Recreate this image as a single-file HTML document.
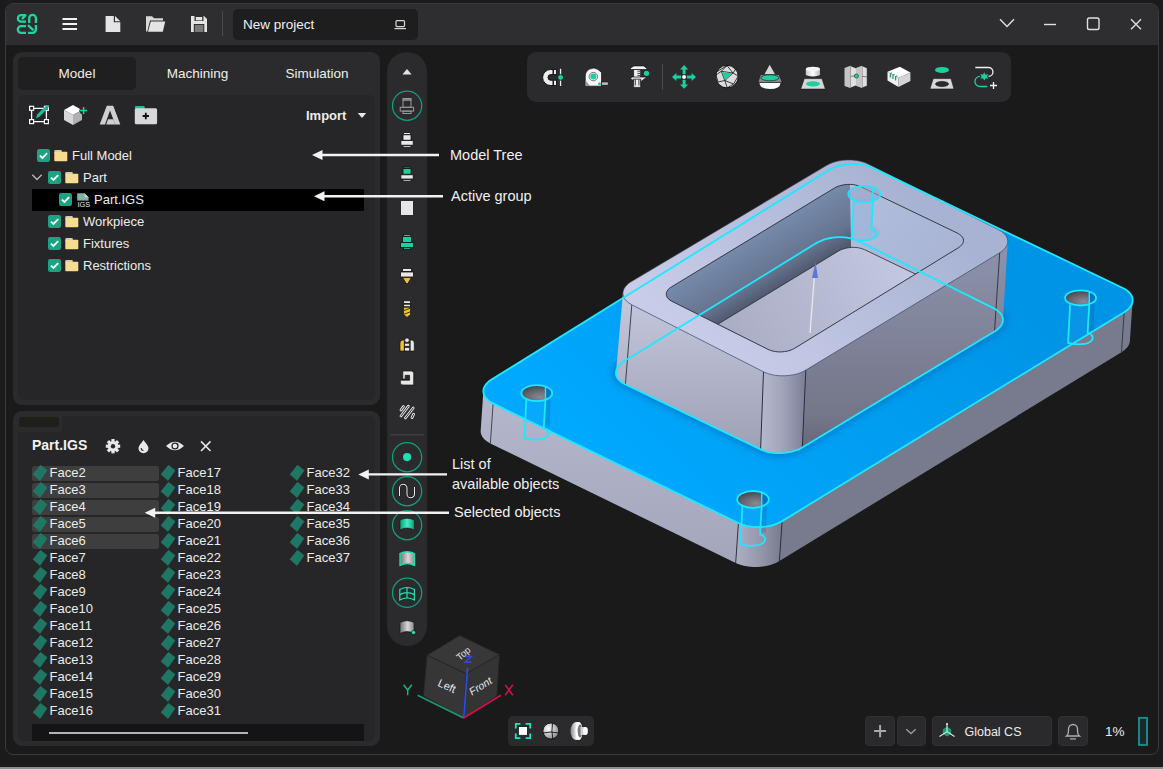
<!DOCTYPE html>
<html><head><meta charset="utf-8">
<style>
*{box-sizing:border-box;margin:0;padding:0}
html,body{width:1163px;height:769px;overflow:hidden;background:#1b1b1b;font-family:"Liberation Sans",sans-serif;color:#e8e8e8}
.a{position:absolute}
#win{position:absolute;left:5px;top:3px;width:1154px;height:752px;border:1px solid #3a3a3c;border-radius:8px;background:#1a1a1a;overflow:hidden}
#bottomline{position:absolute;left:0;top:767px;width:1163px;height:2px;background:#8e8e8e}
#top{position:absolute;left:0;top:0;width:1152px;height:41px;background:#2e2e30}
.panel{position:absolute;background:#2b2b2d;border-radius:9px}
.inner{position:absolute;background:#262628;border-radius:6px}
.tab{position:absolute;top:57px;height:33px;font-size:13.5px;line-height:33px;text-align:center;color:#eee}
.tree{position:absolute;font-size:13px;color:#eaeaea;line-height:14px}
.cb{position:absolute;width:13px;height:13px;background:#1e9c80;border-radius:2px}
.cb svg{position:absolute;left:0;top:0}
.fold{position:absolute;width:12px;height:10px;background:#f2d98c;border-radius:1px}
.fold:before{content:"";position:absolute;left:0;top:-2px;width:6px;height:3px;background:#f2d98c;border-radius:1px 1px 0 0}
.face{position:absolute;font-size:12.5px;color:#ececec;height:15px;line-height:15px}
.face i{position:absolute;left:4px;top:2px;width:10px;height:11px;background:#1f6e5c;transform:skewY(-20deg) rotate(35deg)}
.face.sel{background:#3e3e40;border-radius:2px}
.ann{position:absolute;font-size:14px;color:#ededed;font-family:"Liberation Sans",sans-serif}
.arr{position:absolute;height:2px;background:#f0f0f0}
.arr:before{content:"";position:absolute;left:-2px;top:-5px;border-right:11px solid #f0f0f0;border-top:6px solid transparent;border-bottom:6px solid transparent}
.vt{position:absolute;left:392px;width:30px;height:30px}
.ring{position:absolute;width:30px;height:30px;border:1.5px solid #1a9c7e;border-radius:50%}
</style></head><body>
<div id="win">
  <div id="top"></div>
</div>
<div id="bottomline"></div>

<!-- top bar -->
<svg class="a" style="left:0;top:0" width="1163" height="45" viewBox="0 0 1163 45">
  <g fill="none" stroke="#1dd6a0" stroke-width="2.3" stroke-linecap="butt">
    <path d="M26 15.1 H21.2 A3.3 3.3 0 0 0 21.2 21.7 H26"/>
    <path d="M25.4 15.4 L22.6 18.4" stroke-linecap="round"/>
    <path d="M29.2 22.9 V18.3 A3.35 3.35 0 0 1 35.9 18.3 V22.9"/>
    <path d="M26 26.2 H21.2 A3.35 3.35 0 0 0 21.2 32.9 H26"/>
    <path d="M35.9 24.9 V29.6 A3.3 3.3 0 0 1 32.6 32.9 H28"/>
    <path d="M28.7 25.8 L32.8 29.6" stroke-linecap="round"/>
  </g>
  <g fill="#f2f2f2">
    <rect x="62.5" y="18" width="14.5" height="2"/>
    <rect x="62.5" y="23" width="14.5" height="2"/>
    <rect x="62.5" y="28" width="14.5" height="2"/>
  </g>
  <path d="M105.6 16 H113.8 V22.3 H120.3 V32 H105.6 Z" fill="#e4e4e4"/>
  <path d="M115 16 L120.3 21.2 H115 Z" fill="#e4e4e4"/>
  <path d="M146 16.2 H152 L154 18.3 H163 V20.5 H150 L147.3 31.6 H146 Z" fill="#d8d8d8"/>
  <path d="M150.8 21.4 H165.2 L162.8 31.7 H148 Z" fill="#e4e4e4"/>
  <path d="M191 16 H204 L207 19 V32 H191 Z" fill="#e4e4e4"/>
  <rect x="194.5" y="16" width="9" height="5" fill="#2e2e30"/>
  <rect x="195.8" y="17" width="6.4" height="3.4" fill="#e4e4e4"/>
  <rect x="193.8" y="24" width="10.5" height="8" fill="#2e2e30"/>
  <rect x="194.8" y="25" width="8.5" height="7" fill="#7a7a7a"/>
  <rect x="222" y="11" width="1" height="25" fill="#4a4a4c"/>
  <rect x="233" y="9" width="185" height="31" rx="5" fill="#1e1e1f"/>
  <g fill="none" stroke="#d8d8d8" stroke-width="1.2">
    <rect x="396" y="20.6" width="8.5" height="6" rx="1"/>
    <path d="M394.5 28.6 H406"/>
  </g>
  <g fill="none" stroke="#e0e0e0" stroke-width="1.4">
    <path d="M1000 19.3 L1007 26.4 L1014 19.3"/>
    <path d="M1044 24.5 H1056"/>
    <rect x="1087.5" y="18" width="11.5" height="11.5" rx="1.8"/>
    <path d="M1131 19.2 L1141 29.2 M1141 19.2 L1131 29.2"/>
  </g>
</svg>
<div class="a" style="left:243px;top:17px;font-size:13.5px;line-height:16px;color:#f0f0f0">New project</div>


<!--MODEL--><svg class="a" style="left:0;top:0" width="1163" height="769" viewBox="0 0 1163 769"><defs>
<linearGradient id="plt" gradientUnits="userSpaceOnUse" x1="600" y1="480" x2="900" y2="180"><stop offset="0" stop-color="#00a9ff"/><stop offset="1" stop-color="#0094e6"/></linearGradient>
<linearGradient id="psl" gradientUnits="userSpaceOnUse" x1="0" y1="400" x2="0" y2="560"><stop offset="0" stop-color="#b4b6cc"/><stop offset="1" stop-color="#a4a6bc"/></linearGradient>
<linearGradient id="pcF" gradientUnits="userSpaceOnUse" x1="734" y1="0" x2="779" y2="0"><stop offset="0" stop-color="#aeb0c6"/><stop offset="0.6" stop-color="#9496aa"/><stop offset="1" stop-color="#7c7e92"/></linearGradient>
<linearGradient id="bsl" gradientUnits="userSpaceOnUse" x1="0" y1="300" x2="0" y2="460"><stop offset="0" stop-color="#c4c7dc"/><stop offset="1" stop-color="#9c9eb4"/></linearGradient>
<linearGradient id="bsr" gradientUnits="userSpaceOnUse" x1="0" y1="240" x2="0" y2="460"><stop offset="0" stop-color="#8e93ac"/><stop offset="0.8" stop-color="#747689"/><stop offset="1" stop-color="#606274"/></linearGradient>
<linearGradient id="bcF" gradientUnits="userSpaceOnUse" x1="758" y1="0" x2="803" y2="0"><stop offset="0" stop-color="#b8bbd0"/><stop offset="0.5" stop-color="#a4a7bc"/><stop offset="1" stop-color="#80829a"/></linearGradient>
<linearGradient id="btop" gradientUnits="userSpaceOnUse" x1="720" y1="360" x2="880" y2="170"><stop offset="0" stop-color="#c8cce8"/><stop offset="1" stop-color="#a8b3d3"/></linearGradient>
<linearGradient id="wx0" gradientUnits="userSpaceOnUse" x1="658.6" y1="294.7" x2="687.8" y2="342.5"><stop offset="0" stop-color="#768aab"/><stop offset="0.7" stop-color="#66748f"/><stop offset="1" stop-color="#505a70"/></linearGradient>
<linearGradient id="wy1" gradientUnits="userSpaceOnUse" x1="850" y1="190" x2="970" y2="290"><stop offset="0" stop-color="#b0bede"/><stop offset="1" stop-color="#a8b2d2"/></linearGradient>
<linearGradient id="flr" gradientUnits="userSpaceOnUse" x1="700" y1="340" x2="900" y2="240"><stop offset="0" stop-color="#a6a9c0"/><stop offset="1" stop-color="#c4c8e0"/></linearGradient>
<radialGradient id="hole" cx="0.6" cy="0.75" r="0.7"><stop offset="0" stop-color="#8a8a96"/><stop offset="0.7" stop-color="#60606a"/><stop offset="1" stop-color="#4a4a52"/></radialGradient>
<clipPath id="pkclip"><path d="M671.5 286.9 L669.6 288.2 L668.1 289.6 L667.1 291.2 L666.4 292.7 L666.3 294.4 L666.5 295.9 L667.3 297.5 L668.4 298.9 L670.0 300.2 L671.9 301.3 L768.1 349.4 L770.4 350.4 L773.0 351.1 L775.7 351.6 L778.6 351.9 L781.5 351.9 L784.4 351.6 L787.3 351.1 L790.0 350.4 L792.4 349.4 L794.6 348.3 L958.6 247.6 L960.4 246.3 L961.8 244.8 L962.8 243.3 L963.4 241.7 L963.5 240.2 L963.2 238.6 L962.4 237.1 L961.2 235.7 L959.5 234.4 L957.6 233.2 L860.7 186.7 L858.4 185.8 L855.9 185.1 L853.2 184.6 L850.4 184.4 L847.5 184.4 L844.7 184.7 L841.9 185.2 L839.3 185.9 L836.8 186.8 L834.7 187.9 Z"/></clipPath>
<filter id="blr" x="-10%" y="-10%" width="120%" height="120%"><feGaussianBlur stdDeviation="3"/></filter>
</defs>
<path d="M483.3 391.9 L483.9 394.5 L485.2 397.0 L487.2 399.4 L489.8 401.5 L493.1 403.4 L738.4 523.0 L735.7 563.0 L490.4 443.4 L487.1 441.5 L484.5 439.4 L482.5 437.0 L481.2 434.5 L480.6 431.9 Z" fill="url(#psl)"/>
<path d="M738.4 523.0 L742.2 524.6 L746.4 525.8 L751.0 526.6 L755.7 527.0 L760.6 527.0 L765.4 526.6 L770.1 525.8 L774.5 524.6 L778.5 523.0 L782.1 521.1 L779.4 561.1 L775.8 563.0 L771.8 564.6 L767.4 565.8 L762.7 566.6 L757.9 567.0 L753.0 567.0 L748.3 566.6 L743.7 565.8 L739.5 564.6 L735.7 563.0 Z" fill="url(#pcF)"/>
<path d="M782.1 521.1 L1124.2 312.2 L1127.3 310.0 L1129.8 307.6 L1131.5 305.0 L1132.5 302.3 L1132.7 299.6 L1130.0 339.6 L1129.8 342.3 L1128.8 345.0 L1127.1 347.6 L1124.6 350.0 L1121.5 352.2 L779.4 561.1 Z" fill="#787a8e"/>
<path d="M738.4 523.0 L735.7 563.0" stroke="#2a2a35" stroke-width="0.9"/>
<path d="M782.1 521.1 L779.4 561.1" stroke="#2a2a35" stroke-width="0.9"/>
<path d="M493.1 403.4 L490.4 443.4" stroke="#2a2a35" stroke-width="0.8"/>
<path d="M1124.2 312.2 L1121.5 352.2" stroke="#2a2a35" stroke-width="0.8"/>
<path d="M491.5 379.6 L488.5 381.7 L486.2 384.1 L484.5 386.6 L483.5 389.3 L483.3 391.9 L483.9 394.5 L485.2 397.0 L487.2 399.4 L489.8 401.5 L493.1 403.4 L738.4 523.0 L742.2 524.6 L746.4 525.8 L751.0 526.6 L755.7 527.0 L760.6 527.0 L765.4 526.6 L770.1 525.8 L774.5 524.6 L778.5 523.0 L782.1 521.1 L1124.2 312.2 L1127.3 310.0 L1129.8 307.6 L1131.5 305.0 L1132.5 302.3 L1132.7 299.6 L1132.2 297.0 L1130.9 294.4 L1128.8 292.0 L1126.1 289.8 L1122.8 288.0 L872.8 167.9 L869.0 166.4 L864.7 165.2 L860.1 164.4 L855.3 164.0 L850.4 164.1 L845.6 164.5 L840.9 165.4 L836.4 166.7 L832.3 168.3 L828.7 170.2 Z" fill="url(#plt)"/>
<path d="M545.5 397.2 L550.8 397.2 L549.8 426.2 L544.0 426.2 Z" fill="#003c80" fill-opacity="0.18"/>
<path d="M526.3 399.2 L524.3 438.2 C530.8 440.2 544.8 440.7 548.3 435.2 C550.3 431.7 546.8 428.7 543.8 428.2 L545.5 399.2 Z" fill="#9ab4d8" fill-opacity="0.05"/>
<clipPath id="hc536"><rect x="520.4" y="384.2" width="25.1" height="18"/></clipPath>
<ellipse cx="536.8" cy="393.2" rx="15.4" ry="8" fill="url(#hole)" clip-path="url(#hc536)"/>
<clipPath id="hr536"><rect x="545.5" y="384.2" width="15.4" height="18"/></clipPath>
<ellipse cx="536.8" cy="393.2" rx="15.4" ry="8" fill="#0074c4" clip-path="url(#hr536)"/>
<path d="M761.7 503.4 L767 503.4 L766 532.4 L760.2 532.4 Z" fill="#003c80" fill-opacity="0.18"/>
<path d="M742.5 505.4 L740.5 544.4 C747 546.4 761 546.9 764.5 541.4 C766.5 537.9 763 534.9 760 534.4 L761.7 505.4 Z" fill="#9ab4d8" fill-opacity="0.05"/>
<clipPath id="hc753"><rect x="736.2" y="490.0" width="25.5" height="18.8"/></clipPath>
<ellipse cx="753" cy="499.4" rx="15.8" ry="8.4" fill="url(#hole)" clip-path="url(#hc753)"/>
<clipPath id="hr753"><rect x="761.7" y="490.0" width="15.8" height="18.8"/></clipPath>
<ellipse cx="753" cy="499.4" rx="15.8" ry="8.4" fill="#0074c4" clip-path="url(#hr753)"/>
<path d="M1089.3 301.9 L1094.6 301.9 L1093.6 330.9 L1087.8 330.9 Z" fill="#003c80" fill-opacity="0.18"/>
<path d="M1070.1 303.9 L1068.1 342.9 C1074.6 344.9 1088.6 345.4 1092.1 339.9 C1094.1 336.4 1090.6 333.4 1087.6 332.9 L1089.3 303.9 Z" fill="#9ab4d8" fill-opacity="0.05"/>
<clipPath id="hc1080"><rect x="1064.1" y="289.29999999999995" width="25.2" height="17.2"/></clipPath>
<ellipse cx="1080.6" cy="297.9" rx="15.5" ry="7.6" fill="url(#hole)" clip-path="url(#hc1080)"/>
<clipPath id="hr1080"><rect x="1089.3" y="289.29999999999995" width="15.5" height="17.2"/></clipPath>
<ellipse cx="1080.6" cy="297.9" rx="15.5" ry="7.6" fill="#0074c4" clip-path="url(#hr1080)"/>
<path d="M623.8 361.5 L620.9 363.6 L618.6 365.9 L617.0 368.3 L616.1 370.9 L615.9 373.4 L616.4 376.0 L617.7 378.4 L619.6 380.6 L622.2 382.7 L625.4 384.5 L760.6 449.4 L764.2 450.9 L768.2 452.0 L772.5 452.8 L777.1 453.1 L781.7 453.1 L786.3 452.7 L790.7 451.9 L795.0 450.7 L798.9 449.3 L802.3 447.5 L994.5 331.6 L997.5 329.5 L999.9 327.2 L1001.6 324.7 L1002.6 322.2 L1003.0 319.6 L1002.5 317.0 L1001.4 314.6 L999.5 312.3 L997.0 310.2 L993.9 308.4 L859.0 241.2 L855.4 239.6 L851.3 238.4 L846.9 237.6 L842.2 237.2 L837.5 237.2 L832.8 237.7 L828.2 238.5 L823.9 239.7 L819.9 241.3 L816.3 243.1 Z" fill="none" stroke="#004a90" stroke-opacity="0.35" stroke-width="8" filter="url(#blr)"/>
<path d="M622.9 293.5 L623.3 296.1 L624.4 298.6 L626.3 300.9 L628.8 303.0 L631.8 304.8 L763.5 371.8 L760.6 449.4 L625.4 384.5 L622.2 382.7 L619.6 380.6 L617.7 378.4 L616.4 376.0 L615.9 373.4 Z" fill="url(#bsl)"/>
<path d="M763.5 371.8 L767.2 373.3 L771.2 374.5 L775.5 375.4 L780.1 375.8 L784.8 375.8 L789.5 375.4 L794.0 374.7 L798.3 373.5 L802.2 372.0 L805.8 370.1 L802.3 447.5 L798.9 449.3 L795.0 450.7 L790.7 451.9 L786.3 452.7 L781.7 453.1 L777.1 453.1 L772.5 452.8 L768.2 452.0 L764.2 450.9 L760.6 449.4 Z" fill="url(#bcF)"/>
<path d="M805.8 370.1 L999.7 252.8 L1002.6 250.7 L1004.9 248.5 L1006.6 246.0 L1007.6 243.5 L1007.8 241.0 L1003.0 319.6 L1002.6 322.2 L1001.6 324.7 L999.9 327.2 L997.5 329.5 L994.5 331.6 L802.3 447.5 Z" fill="url(#bsr)"/>
<path d="M763.5 371.8 L760.6 449.4" stroke="#22222c" stroke-width="0.9"/>
<path d="M805.8 370.1 L802.3 447.5" stroke="#22222c" stroke-width="0.9"/>
<path d="M631.8 304.8 L625.4 384.5" stroke="#22222c" stroke-width="0.8"/>
<path d="M999.7 252.8 L994.5 331.6" stroke="#22222c" stroke-width="0.8"/>
<path d="M631.4 281.6 L628.4 283.6 L626.0 285.9 L624.2 288.4 L623.2 290.9 L622.9 293.5 L623.3 296.1 L624.4 298.6 L626.3 300.9 L628.8 303.0 L631.8 304.8 L763.5 371.8 L767.2 373.3 L771.2 374.5 L775.5 375.4 L780.1 375.8 L784.8 375.8 L789.5 375.4 L794.0 374.7 L798.3 373.5 L802.2 372.0 L805.8 370.1 L999.7 252.8 L1002.6 250.7 L1004.9 248.5 L1006.6 246.0 L1007.6 243.5 L1007.8 241.0 L1007.3 238.4 L1006.2 236.0 L1004.3 233.7 L1001.8 231.6 L998.7 229.8 L868.0 164.0 L864.4 162.4 L860.4 161.3 L856.1 160.4 L851.6 160.0 L847.0 160.0 L842.4 160.3 L838.0 161.1 L833.7 162.2 L829.8 163.7 L826.4 165.5 Z" fill="url(#btop)" stroke="#3a3c48" stroke-width="0.6"/>
<g clip-path="url(#pkclip)">
<path d="M671.5 286.9 L669.6 288.2 L668.1 289.6 L667.1 291.2 L666.4 292.7 L666.3 294.4 L666.5 295.9 L667.3 297.5 L668.4 298.9 L670.0 300.2 L671.9 301.3 L768.1 349.4 L770.4 350.4 L773.0 351.1 L775.7 351.6 L778.6 351.9 L781.5 351.9 L784.4 351.6 L787.3 351.1 L790.0 350.4 L792.4 349.4 L794.6 348.3 L958.6 247.6 L960.4 246.3 L961.8 244.8 L962.8 243.3 L963.4 241.7 L963.5 240.2 L963.2 238.6 L962.4 237.1 L961.2 235.7 L959.5 234.4 L957.6 233.2 L860.7 186.7 L858.4 185.8 L855.9 185.1 L853.2 184.6 L850.4 184.4 L847.5 184.4 L844.7 184.7 L841.9 185.2 L839.3 185.9 L836.8 186.8 L834.7 187.9 Z" fill="url(#wy1)"/>
<path d="M600 150 L849.3 150 L851.3 260 L600 420 Z" fill="url(#wx0)"/>
<path d="M675.5 349.9 L673.6 351.2 L672.1 352.6 L671.1 354.2 L670.4 355.7 L670.3 357.4 L670.5 358.9 L671.3 360.5 L672.4 361.9 L674.0 363.2 L675.9 364.3 L772.1 412.4 L774.4 413.4 L777.0 414.1 L779.7 414.6 L782.6 414.9 L785.5 414.9 L788.4 414.6 L791.3 414.1 L794.0 413.4 L796.4 412.4 L798.6 411.3 L962.6 310.6 L964.4 309.3 L965.8 307.8 L966.8 306.3 L967.4 304.7 L967.5 303.2 L967.2 301.6 L966.4 300.1 L965.2 298.7 L963.5 297.4 L961.6 296.2 L864.7 249.7 L862.4 248.8 L859.9 248.1 L857.2 247.6 L854.4 247.4 L851.5 247.4 L848.7 247.7 L845.9 248.2 L843.3 248.9 L840.8 249.8 L838.7 250.9 Z" fill="url(#flr)"/>
<path d="M675.5 349.9 L673.6 351.2 L672.1 352.6 L671.1 354.2 L670.4 355.7 L670.3 357.4 L670.5 358.9 L671.3 360.5 L672.4 361.9 L674.0 363.2 L675.9 364.3 L772.1 412.4 L774.4 413.4 L777.0 414.1 L779.7 414.6 L782.6 414.9 L785.5 414.9 L788.4 414.6 L791.3 414.1 L794.0 413.4 L796.4 412.4 L798.6 411.3 L962.6 310.6 L964.4 309.3 L965.8 307.8 L966.8 306.3 L967.4 304.7 L967.5 303.2 L967.2 301.6 L966.4 300.1 L965.2 298.7 L963.5 297.4 L961.6 296.2 L864.7 249.7 L862.4 248.8 L859.9 248.1 L857.2 247.6 L854.4 247.4 L851.5 247.4 L848.7 247.7 L845.9 248.2 L843.3 248.9 L840.8 249.8 L838.7 250.9 Z" fill="none" stroke="#2a2a35" stroke-width="0.8"/>
</g>
<path d="M671.5 286.9 L669.6 288.2 L668.1 289.6 L667.1 291.2 L666.4 292.7 L666.3 294.4 L666.5 295.9 L667.3 297.5 L668.4 298.9 L670.0 300.2 L671.9 301.3 L768.1 349.4 L770.4 350.4 L773.0 351.1 L775.7 351.6 L778.6 351.9 L781.5 351.9 L784.4 351.6 L787.3 351.1 L790.0 350.4 L792.4 349.4 L794.6 348.3 L958.6 247.6 L960.4 246.3 L961.8 244.8 L962.8 243.3 L963.4 241.7 L963.5 240.2 L963.2 238.6 L962.4 237.1 L961.2 235.7 L959.5 234.4 L957.6 233.2 L860.7 186.7 L858.4 185.8 L855.9 185.1 L853.2 184.6 L850.4 184.4 L847.5 184.4 L844.7 184.7 L841.9 185.2 L839.3 185.9 L836.8 186.8 L834.7 187.9 Z" fill="none" stroke="#2a2a35" stroke-width="0.9"/>
<path d="M810 333 L814.5 275" stroke="#e8e8f0" stroke-width="1.3"/>
<path d="M812 278 L815.5 262 L818 278 Z" fill="#5a78d8"/>
<ellipse cx="864.3" cy="194" rx="16" ry="8.2" fill="#9aa4c4" fill-opacity="0.6"/>
<path d="M852.8 199 V237.5 L861 239.8 A10 6 0 0 0 873 225.8 V199 Z" fill="#8ab0d8" fill-opacity="0.35"/>
<g fill="none" stroke="#1ee8ff" stroke-width="1.8">
<path d="M491.5 379.6 L488.5 381.7 L486.2 384.1 L484.5 386.6 L483.5 389.3 L483.3 391.9 L483.9 394.5 L485.2 397.0 L487.2 399.4 L489.8 401.5 L493.1 403.4 L738.4 523.0 L742.2 524.6 L746.4 525.8 L751.0 526.6 L755.7 527.0 L760.6 527.0 L765.4 526.6 L770.1 525.8 L774.5 524.6 L778.5 523.0 L782.1 521.1 L1124.2 312.2 L1127.3 310.0 L1129.8 307.6 L1131.5 305.0 L1132.5 302.3 L1132.7 299.6 L1132.2 297.0 L1130.9 294.4 L1128.8 292.0 L1126.1 289.8 L1122.8 288.0 L872.8 167.9 L869.0 166.4 L864.7 165.2 L860.1 164.4 L855.3 164.0 L850.4 164.1 L845.6 164.5 L840.9 165.4 L836.4 166.7 L832.3 168.3 L828.7 170.2 Z"/>
<path d="M623.8 361.5 L620.9 363.6 L618.6 365.9 L617.0 368.3 L616.1 370.9 L615.9 373.4 L616.4 376.0 L617.7 378.4 L619.6 380.6 L622.2 382.7 L625.4 384.5 L760.6 449.4 L764.2 450.9 L768.2 452.0 L772.5 452.8 L777.1 453.1 L781.7 453.1 L786.3 452.7 L790.7 451.9 L795.0 450.7 L798.9 449.3 L802.3 447.5 L994.5 331.6 L997.5 329.5 L999.9 327.2 L1001.6 324.7 L1002.6 322.2 L1003.0 319.6 L1002.5 317.0 L1001.4 314.6 L999.5 312.3 L997.0 310.2 L993.9 308.4 L859.0 241.2 L855.4 239.6 L851.3 238.4 L846.9 237.6 L842.2 237.2 L837.5 237.2 L832.8 237.7 L828.2 238.5 L823.9 239.7 L819.9 241.3 L816.3 243.1 Z"/>
<ellipse cx="536.8" cy="393.2" rx="15.4" ry="8"/>
<path d="M526.3 399.7 L524.3 438.2 C530.8 440.2 544.8 440.7 548.3 435.2 C550.3 431.7 546.8 428.7 543.8 428.2 L545.5 399.7"/>
<path d="M545.5 386.0 V400.4" stroke-width="1.4"/>
<ellipse cx="753" cy="499.4" rx="15.8" ry="8.4"/>
<path d="M742.5 505.9 L740.5 544.4 C747 546.4 761 546.9 764.5 541.4 C766.5 537.9 763 534.9 760 534.4 L761.7 505.9"/>
<path d="M761.7 491.8 V506.99999999999994" stroke-width="1.4"/>
<ellipse cx="1080.6" cy="297.9" rx="15.5" ry="7.6"/>
<path d="M1070.1 304.4 L1068.1 342.9 C1074.6 344.9 1088.6 345.4 1092.1 339.9 C1094.1 336.4 1090.6 333.4 1087.6 332.9 L1089.3 304.4"/>
<path d="M1089.3 291.09999999999997 V304.7" stroke-width="1.4"/>
<ellipse cx="864.3" cy="194" rx="16" ry="8.2"/>
<path d="M853.8 200.5 L851.8 239 C858.3 241 872.3 241.5 875.8 236 C877.8 232.5 874.3 229.5 871.3 229 L873.0 200.5"/>
<path d="M873.0 186.60000000000002 V201.39999999999998" stroke-width="1.4"/>
</g></svg><!--/MODEL-->
<!-- left upper panel -->
<div class="panel" style="left:13px;top:52px;width:367px;height:352.5px"></div>
<div class="tab" style="left:18px;width:118px;background:#1f1f1f;border-radius:5px">Model</div>
<div class="tab" style="left:140px;width:115px">Machining</div>
<div class="tab" style="left:258px;width:118px">Simulation</div>
<div class="inner" style="left:18px;top:95px;width:357px;height:304.5px"></div>

<!-- tree -->
<svg class="a" style="left:26px;top:103px" width="135" height="25" viewBox="26 103 135 25">
 <g fill="none" stroke="#fff" stroke-width="1.3">
  <path d="M33.5 108.3 H44.5 M33.5 121.6 H44.5 M31.6 110.2 V119.7 M46.4 110.2 V119.7"/>
 </g>
 <g fill="#1e1e1e" stroke="#fff" stroke-width="1.2">
  <rect x="29.6" y="106.3" width="4" height="4"/><rect x="44.4" y="106.3" width="4" height="4"/>
  <rect x="29.6" y="119.6" width="4" height="4"/><rect x="44.4" y="119.6" width="4" height="4"/>
 </g>
 <path d="M36 118.5 L37.2 114.6 L45.2 106.6 L47.4 108.8 L39.4 116.8 Z" fill="#1dbf98"/>
 <path d="M45.2 106.6 L46.3 105.5 A1.5 1.5 0 0 1 48.5 107.7 L47.4 108.8 Z" fill="#1dbf98"/>
 <path d="M64 110 L73 105 L82 110 L73 115 Z" fill="#ffffff"/>
 <path d="M64 110 L73 115 V125 L64 120 Z" fill="#d6d6d6"/>
 <path d="M82 110 L73 115 V125 L82 120 Z" fill="#b0b0b0"/>
 <circle cx="83.6" cy="110.5" r="4.2" fill="#2b2b2d"/>
 <path d="M83.6 107 V114 M80.1 110.5 H87.1" stroke="#1dd6a0" stroke-width="1.4"/>
 <path d="M99.7 124.4 L106.8 105.7 H113.2 L120.3 124.4 H115.2 L113.3 119.3 L110 110.5 L105 124.4 Z" fill="#cfcfcf"/>
 <path d="M108 119.3 H113.3 L115.2 124.4 H106.2 Z" fill="#cfcfcf"/>
 <rect x="134.8" y="106" width="10" height="3.2" rx="1.4" fill="#1dbf98"/>
 <rect x="134.8" y="108.2" width="22.3" height="16" rx="1.5" fill="#d8d8d8"/>
 <path d="M145.8 112.8 V119.2 M142.6 116 H149" stroke="#111" stroke-width="1.8"/>
</svg>
<div class="a" style="left:306px;top:108px;font-size:13px;font-weight:bold;line-height:15px;color:#ececec">Import</div>
<svg class="a" style="left:356px;top:112px" width="12" height="7"><path d="M1.8 1 H10.2 L6 6 Z" fill="#e8e8e8"/></svg>
<div class="a" style="left:32px;top:189px;width:332px;height:22px;background:#000"></div>
<svg class="a" style="left:37px;top:149px" width="13" height="13"><rect width="13" height="13" rx="2.2" fill="#1ba383"/><path d="M2.9 6.6 L5.4 9 L10.2 4.2" fill="none" stroke="#fff" stroke-width="1.8"/></svg><svg class="a" style="left:54px;top:150px" width="14" height="12"><rect x="0.3" y="0" width="7.5" height="3" rx="1" fill="#cfc9b8"/><rect x="0.3" y="1.7" width="13" height="9.6" rx="0.8" fill="#f5dc8e"/></svg><div class="a" style="left:72px;top:149px;font-size:13px;line-height:14px;color:#ececec;white-space:nowrap;">Full Model</div>
<svg class="a" style="left:31px;top:173px" width="12" height="9"><path d="M1.3 1.8 L6 6.5 L10.7 1.8" fill="none" stroke="#b8b8b8" stroke-width="1.3"/></svg>
<svg class="a" style="left:48px;top:171px" width="13" height="13"><rect width="13" height="13" rx="2.2" fill="#1ba383"/><path d="M2.9 6.6 L5.4 9 L10.2 4.2" fill="none" stroke="#fff" stroke-width="1.8"/></svg><svg class="a" style="left:65px;top:172px" width="14" height="12"><rect x="0.3" y="0" width="7.5" height="3" rx="1" fill="#cfc9b8"/><rect x="0.3" y="1.7" width="13" height="9.6" rx="0.8" fill="#f5dc8e"/></svg><div class="a" style="left:83px;top:171px;font-size:13px;line-height:14px;color:#ececec;white-space:nowrap;">Part</div>
<svg class="a" style="left:59px;top:193px" width="13" height="13"><rect width="13" height="13" rx="2.2" fill="#1ba383"/><path d="M2.9 6.6 L5.4 9 L10.2 4.2" fill="none" stroke="#fff" stroke-width="1.8"/></svg><svg class="a" style="left:76px;top:193px" width="15" height="14"><path d="M1.2 0.2 H8.5 L12.5 4.2 V13.5 H1.2 Z" fill="#7fb3a6"/><path d="M8.5 0.2 V4.2 H12.5" fill="#b8d8cf"/><rect x="1" y="7.6" width="13.5" height="6.2" fill="#000"/><text x="1.5" y="13.6" font-family="Liberation Sans" font-size="7.4" fill="#e8e8e8">IGS</text></svg><div class="a" style="left:94px;top:193px;font-size:13px;line-height:14px;color:#ececec;white-space:nowrap;">Part.IGS</div>
<svg class="a" style="left:48px;top:215px" width="13" height="13"><rect width="13" height="13" rx="2.2" fill="#1ba383"/><path d="M2.9 6.6 L5.4 9 L10.2 4.2" fill="none" stroke="#fff" stroke-width="1.8"/></svg><svg class="a" style="left:65px;top:216px" width="14" height="12"><rect x="0.3" y="0" width="7.5" height="3" rx="1" fill="#cfc9b8"/><rect x="0.3" y="1.7" width="13" height="9.6" rx="0.8" fill="#f5dc8e"/></svg><div class="a" style="left:83px;top:215px;font-size:13px;line-height:14px;color:#ececec;white-space:nowrap;">Workpiece</div>
<svg class="a" style="left:48px;top:237px" width="13" height="13"><rect width="13" height="13" rx="2.2" fill="#1ba383"/><path d="M2.9 6.6 L5.4 9 L10.2 4.2" fill="none" stroke="#fff" stroke-width="1.8"/></svg><svg class="a" style="left:65px;top:238px" width="14" height="12"><rect x="0.3" y="0" width="7.5" height="3" rx="1" fill="#cfc9b8"/><rect x="0.3" y="1.7" width="13" height="9.6" rx="0.8" fill="#f5dc8e"/></svg><div class="a" style="left:83px;top:237px;font-size:13px;line-height:14px;color:#ececec;white-space:nowrap;">Fixtures</div>
<svg class="a" style="left:48px;top:259px" width="13" height="13"><rect width="13" height="13" rx="2.2" fill="#1ba383"/><path d="M2.9 6.6 L5.4 9 L10.2 4.2" fill="none" stroke="#fff" stroke-width="1.8"/></svg><svg class="a" style="left:65px;top:260px" width="14" height="12"><rect x="0.3" y="0" width="7.5" height="3" rx="1" fill="#cfc9b8"/><rect x="0.3" y="1.7" width="13" height="9.6" rx="0.8" fill="#f5dc8e"/></svg><div class="a" style="left:83px;top:259px;font-size:13px;line-height:14px;color:#ececec;white-space:nowrap;">Restrictions</div>
<!-- left lower panel -->
<div class="panel" style="left:13px;top:410.5px;width:367px;height:335px"></div>
<div class="inner" style="left:62px;top:416px;width:313px;height:100px;border-radius:0 6px 0 0"></div>
<div class="inner" style="left:18px;top:432px;width:357px;height:309px;border-radius:0 0 6px 6px"></div>

<!-- faces -->
<div class="a" style="left:19px;top:417px;width:40px;height:10px;background:#1e1e1b;border-radius:3px"></div>
<div class="a" style="left:32px;top:437px;font-size:14px;font-weight:bold;line-height:17px;color:#f0f0f0">Part.IGS</div>
<svg class="a" style="left:100px;top:436px" width="120" height="20" viewBox="100 436 120 20">
 <g transform="translate(113 446.2)" fill="#e8e8e8">
  <circle r="5.2"/>
  <g><rect x="-1.6" y="-7.2" width="3.2" height="14.4"/><rect x="-1.6" y="-7.2" width="3.2" height="14.4" transform="rotate(45)"/><rect x="-1.6" y="-7.2" width="3.2" height="14.4" transform="rotate(90)"/><rect x="-1.6" y="-7.2" width="3.2" height="14.4" transform="rotate(135)"/></g>
  <circle r="2.2" fill="#262628"/>
 </g>
 <path d="M143.5 440 C141 443.5 138.5 446 138.5 448.3 A5 5 0 0 0 148.5 448.3 C148.5 446 146 443.5 143.5 440 Z" fill="#e8e8e8"/>
 <path d="M141.2 448 A2.5 2.5 0 0 0 143.5 450.5" stroke="#262628" stroke-width="1.1" fill="none"/>
 <path d="M166 446 Q175 437.5 184 446 Q175 454.5 166 446 Z" fill="#e8e8e8"/>
 <circle cx="175" cy="446" r="3.6" fill="#262628"/>
 <circle cx="175" cy="446" r="2.3" fill="#e8e8e8"/>
 <path d="M176 443.5 h2.2 v2.2" fill="#262628"/>
 <path d="M201 441.4 L210.5 451 M210.5 441.4 L201 451" stroke="#e8e8e8" stroke-width="1.5"/>
</svg>
<div class="a" style="left:32px;top:466px;width:127px;height:14.6px;background:#3e3e3e;border-radius:2.5px"></div>
<div class="a" style="left:49.5px;top:465px;font-size:13px;line-height:15px;color:#ececec">Face2</div>
<div class="a" style="left:32px;top:483px;width:127px;height:14.6px;background:#3e3e3e;border-radius:2.5px"></div>
<div class="a" style="left:49.5px;top:482px;font-size:13px;line-height:15px;color:#ececec">Face3</div>
<div class="a" style="left:32px;top:500px;width:127px;height:14.6px;background:#3e3e3e;border-radius:2.5px"></div>
<div class="a" style="left:49.5px;top:499px;font-size:13px;line-height:15px;color:#ececec">Face4</div>
<div class="a" style="left:32px;top:517px;width:127px;height:14.6px;background:#3e3e3e;border-radius:2.5px"></div>
<div class="a" style="left:49.5px;top:516px;font-size:13px;line-height:15px;color:#ececec">Face5</div>
<div class="a" style="left:32px;top:534px;width:127px;height:14.6px;background:#3e3e3e;border-radius:2.5px"></div>
<div class="a" style="left:49.5px;top:533px;font-size:13px;line-height:15px;color:#ececec">Face6</div>
<div class="a" style="left:49.5px;top:550px;font-size:13px;line-height:15px;color:#ececec">Face7</div>
<div class="a" style="left:49.5px;top:567px;font-size:13px;line-height:15px;color:#ececec">Face8</div>
<div class="a" style="left:49.5px;top:584px;font-size:13px;line-height:15px;color:#ececec">Face9</div>
<div class="a" style="left:49.5px;top:601px;font-size:13px;line-height:15px;color:#ececec">Face10</div>
<div class="a" style="left:49.5px;top:618px;font-size:13px;line-height:15px;color:#ececec">Face11</div>
<div class="a" style="left:49.5px;top:635px;font-size:13px;line-height:15px;color:#ececec">Face12</div>
<div class="a" style="left:49.5px;top:652px;font-size:13px;line-height:15px;color:#ececec">Face13</div>
<div class="a" style="left:49.5px;top:669px;font-size:13px;line-height:15px;color:#ececec">Face14</div>
<div class="a" style="left:49.5px;top:686px;font-size:13px;line-height:15px;color:#ececec">Face15</div>
<div class="a" style="left:49.5px;top:703px;font-size:13px;line-height:15px;color:#ececec">Face16</div>
<div class="a" style="left:177.5px;top:465px;font-size:13px;line-height:15px;color:#ececec">Face17</div>
<div class="a" style="left:177.5px;top:482px;font-size:13px;line-height:15px;color:#ececec">Face18</div>
<div class="a" style="left:177.5px;top:499px;font-size:13px;line-height:15px;color:#ececec">Face19</div>
<div class="a" style="left:177.5px;top:516px;font-size:13px;line-height:15px;color:#ececec">Face20</div>
<div class="a" style="left:177.5px;top:533px;font-size:13px;line-height:15px;color:#ececec">Face21</div>
<div class="a" style="left:177.5px;top:550px;font-size:13px;line-height:15px;color:#ececec">Face22</div>
<div class="a" style="left:177.5px;top:567px;font-size:13px;line-height:15px;color:#ececec">Face23</div>
<div class="a" style="left:177.5px;top:584px;font-size:13px;line-height:15px;color:#ececec">Face24</div>
<div class="a" style="left:177.5px;top:601px;font-size:13px;line-height:15px;color:#ececec">Face25</div>
<div class="a" style="left:177.5px;top:618px;font-size:13px;line-height:15px;color:#ececec">Face26</div>
<div class="a" style="left:177.5px;top:635px;font-size:13px;line-height:15px;color:#ececec">Face27</div>
<div class="a" style="left:177.5px;top:652px;font-size:13px;line-height:15px;color:#ececec">Face28</div>
<div class="a" style="left:177.5px;top:669px;font-size:13px;line-height:15px;color:#ececec">Face29</div>
<div class="a" style="left:177.5px;top:686px;font-size:13px;line-height:15px;color:#ececec">Face30</div>
<div class="a" style="left:177.5px;top:703px;font-size:13px;line-height:15px;color:#ececec">Face31</div>
<div class="a" style="left:306.5px;top:465px;font-size:13px;line-height:15px;color:#ececec">Face32</div>
<div class="a" style="left:306.5px;top:482px;font-size:13px;line-height:15px;color:#ececec">Face33</div>
<div class="a" style="left:306.5px;top:499px;font-size:13px;line-height:15px;color:#ececec">Face34</div>
<div class="a" style="left:306.5px;top:516px;font-size:13px;line-height:15px;color:#ececec">Face35</div>
<div class="a" style="left:306.5px;top:533px;font-size:13px;line-height:15px;color:#ececec">Face36</div>
<div class="a" style="left:306.5px;top:550px;font-size:13px;line-height:15px;color:#ececec">Face37</div>
<svg class="a" style="left:0;top:0" width="400" height="769"><g fill="#1f7763" stroke="#237e69" stroke-width="0.6"><path d="M40.5 465.3 L47 470.4 L40 480.4 L33.1 474.3 Z"/><path d="M40.5 482.3 L47 487.4 L40 497.4 L33.1 491.3 Z"/><path d="M40.5 499.3 L47 504.4 L40 514.4 L33.1 508.3 Z"/><path d="M40.5 516.3 L47 521.4 L40 531.4 L33.1 525.3 Z"/><path d="M40.5 533.3 L47 538.4 L40 548.4 L33.1 542.3 Z"/><path d="M40.5 550.3 L47 555.4 L40 565.4 L33.1 559.3 Z"/><path d="M40.5 567.3 L47 572.4 L40 582.4 L33.1 576.3 Z"/><path d="M40.5 584.3 L47 589.4 L40 599.4 L33.1 593.3 Z"/><path d="M40.5 601.3 L47 606.4 L40 616.4 L33.1 610.3 Z"/><path d="M40.5 618.3 L47 623.4 L40 633.4 L33.1 627.3 Z"/><path d="M40.5 635.3 L47 640.4 L40 650.4 L33.1 644.3 Z"/><path d="M40.5 652.3 L47 657.4 L40 667.4 L33.1 661.3 Z"/><path d="M40.5 669.3 L47 674.4 L40 684.4 L33.1 678.3 Z"/><path d="M40.5 686.3 L47 691.4 L40 701.4 L33.1 695.3 Z"/><path d="M40.5 703.3 L47 708.4 L40 718.4 L33.1 712.3 Z"/><path d="M168.5 465.3 L175 470.4 L168 480.4 L161.1 474.3 Z"/><path d="M168.5 482.3 L175 487.4 L168 497.4 L161.1 491.3 Z"/><path d="M168.5 499.3 L175 504.4 L168 514.4 L161.1 508.3 Z"/><path d="M168.5 516.3 L175 521.4 L168 531.4 L161.1 525.3 Z"/><path d="M168.5 533.3 L175 538.4 L168 548.4 L161.1 542.3 Z"/><path d="M168.5 550.3 L175 555.4 L168 565.4 L161.1 559.3 Z"/><path d="M168.5 567.3 L175 572.4 L168 582.4 L161.1 576.3 Z"/><path d="M168.5 584.3 L175 589.4 L168 599.4 L161.1 593.3 Z"/><path d="M168.5 601.3 L175 606.4 L168 616.4 L161.1 610.3 Z"/><path d="M168.5 618.3 L175 623.4 L168 633.4 L161.1 627.3 Z"/><path d="M168.5 635.3 L175 640.4 L168 650.4 L161.1 644.3 Z"/><path d="M168.5 652.3 L175 657.4 L168 667.4 L161.1 661.3 Z"/><path d="M168.5 669.3 L175 674.4 L168 684.4 L161.1 678.3 Z"/><path d="M168.5 686.3 L175 691.4 L168 701.4 L161.1 695.3 Z"/><path d="M168.5 703.3 L175 708.4 L168 718.4 L161.1 712.3 Z"/><path d="M297.5 465.3 L304 470.4 L297 480.4 L290.1 474.3 Z"/><path d="M297.5 482.3 L304 487.4 L297 497.4 L290.1 491.3 Z"/><path d="M297.5 499.3 L304 504.4 L297 514.4 L290.1 508.3 Z"/><path d="M297.5 516.3 L304 521.4 L297 531.4 L290.1 525.3 Z"/><path d="M297.5 533.3 L304 538.4 L297 548.4 L290.1 542.3 Z"/><path d="M297.5 550.3 L304 555.4 L297 565.4 L290.1 559.3 Z"/></g></svg>
<div class="a" style="left:32px;top:724px;width:332px;height:17px;background:#141414"></div>
<div class="a" style="left:49px;top:731.5px;width:199px;height:2px;background:#b4b4b4"></div>
<!-- vertical toolbar -->
<div class="panel" style="left:387px;top:52px;width:40px;height:594px;border-radius:20px"></div>
<svg class="a" style="left:386px;top:50px" width="44" height="600" viewBox="386 50 44 600">
 <path d="M402.4 74.4 L407 69 L411.6 74.4 Z" fill="#e2e2e2"/>
 <g fill="none" stroke="#12a07c" stroke-width="1.25">
  <circle cx="407.1" cy="105.7" r="14.6"/>
  <circle cx="407.1" cy="457.2" r="14.6"/>
  <circle cx="407.1" cy="491.2" r="14.6"/>
  <circle cx="407.1" cy="525.2" r="14.6"/>
  <circle cx="407.1" cy="592.8" r="14.6"/>
 </g>
 <g fill="none" stroke="#9a9a9a" stroke-width="1">
  <rect x="403" y="98.5" width="8" height="1.5"/>
  <rect x="403" y="100" width="8" height="7.3"/>
  <rect x="400.2" y="107.3" width="13.4" height="3.8"/>
  <rect x="403" y="111.1" width="8" height="2.4"/>
 </g>
 <g stroke="#111" stroke-width="0.8">
  <rect x="403.7" y="132.6" width="6.8" height="1.8" fill="#e8e8e8"/>
  <rect x="403" y="134.8" width="8" height="5.4" fill="#e8e8e8"/>
  <rect x="400.9" y="140.6" width="12.3" height="4.6" fill="#e8e8e8"/>
  <rect x="403" y="145.6" width="8" height="1.6" fill="#e8e8e8"/>
  <rect x="403.7" y="166.5" width="6.8" height="1.4" fill="#1dcfa0"/>
  <rect x="403" y="168.6" width="8" height="5.6" fill="#1dcfa0"/>
  <rect x="400.9" y="174.8" width="12.3" height="4.2" fill="#e8e8e8"/>
  <rect x="403" y="179.7" width="8" height="1.5" fill="#e8e8e8"/>
 </g>
 <rect x="401" y="201" width="12" height="14" fill="#e6e6e6"/>
 <g stroke="#111" stroke-width="0.8" fill="#1dcfa0">
  <rect x="403.5" y="234.4" width="7" height="2"/>
  <rect x="402.5" y="236.6" width="9" height="6"/>
  <rect x="400.6" y="242.6" width="12.8" height="5"/>
  <rect x="403.5" y="247.8" width="7" height="1.8"/>
 </g>
 <g stroke="#111" stroke-width="0.8">
  <rect x="402.6" y="268.4" width="8.8" height="3" fill="#e8e8e8"/>
  <rect x="400.6" y="272" width="12.8" height="5" fill="#e8e8e8"/>
  <path d="M402.6 277.6 H411.4 L407.8 283.6 H406.2 Z" fill="#f2c42c"/>
  <rect x="403.4" y="300.8" width="7.2" height="2.8" fill="#e8e8e8"/>
  <rect x="403.4" y="304.2" width="7.2" height="2.6" fill="#e8e8e8"/>
  <path d="M403.4 307.2 H410.6 V314.6 L407 317.4 L403.4 314.6 Z" fill="#f2c42c"/>
 </g>
 <path d="M403.6 310.6 L410 308.4 M403.6 314.4 L410.4 311.8" stroke="#3a3410" stroke-width="1"/>
 <g stroke="#111" stroke-width="0.7">
  <path d="M400 351 V343 A3 3 0 0 1 403 340 H404.3 V351 Z" fill="#f2c42c"/>
  <path d="M414.3 351 V343 A3 3 0 0 0 411.3 340 H410.2 V351 Z" fill="#e8e8e8"/>
  <circle cx="407" cy="340.2" r="2.3" fill="#e8e8e8"/>
  <rect x="404.6" y="343.2" width="5" height="3" fill="#e8e8e8"/>
  <rect x="404.6" y="347.4" width="5" height="3.6" fill="#e8e8e8"/>
  <path d="M402.8 371 H411.2 A2.5 2.5 0 0 1 413.7 373.5 V385 H403 A2.6 2.6 0 0 1 400.4 382.4 V380.2 H409.6 V375.3 H405.2 V379 H402.8 Z" fill="#e8e8e8" stroke="#111" stroke-width="0.7"/>
 </g>
 <g fill="none" stroke-linecap="round">
  <path d="M401 410 L403.4 406.6 M401 416 L408.4 406.2 M405.4 418 L413.2 408 M412 417.6 L413.6 414.2" stroke="#e6e6e6" stroke-width="2.8"/>
  <path d="M401 410 L403.4 406.6 M401 416 L408.4 406.2 M405.4 418 L413.2 408 M412 417.6 L413.6 414.2" stroke="#2b2b2d" stroke-width="1"/>
 </g>
 <rect x="390" y="434.3" width="34" height="1" fill="#48484a"/>
 <circle cx="407.1" cy="457.1" r="4.1" fill="#1de2b0"/>
 <path d="M399.5 496 V488 A3.75 3.75 0 0 1 407 488 V494 A3.75 3.75 0 0 0 414.5 494 V487" fill="none" stroke="#111" stroke-width="2.2"/>
 <path d="M399.5 496 V488 A3.75 3.75 0 0 1 407 488 V494 A3.75 3.75 0 0 0 414.5 494 V487" fill="none" stroke="#e8e8e8" stroke-width="1.1"/>
 <defs>
  <linearGradient id="tg" x1="0" x2="1"><stop offset="0" stop-color="#0c9a76"/><stop offset="0.5" stop-color="#3ff0c4"/><stop offset="1" stop-color="#0e9e7a"/></linearGradient>
  <linearGradient id="gg" x1="0" x2="1"><stop offset="0" stop-color="#707070"/><stop offset="0.55" stop-color="#d8d8d8"/><stop offset="1" stop-color="#8a8a8a"/></linearGradient>
 </defs>
 <path d="M400 520 Q407 516.5 414.3 520 V530 Q407 526 400 530 Z" fill="url(#tg)" stroke="#111" stroke-width="0.6"/>
 <path d="M400 553.5 Q407 550 414.5 553.5 V565.5 Q407 561.5 400 565.5 Z" fill="url(#gg)" stroke="#1de2b0" stroke-width="1.3"/>
 <g fill="none" stroke="#1de2b0" stroke-width="1.2">
  <path d="M399.8 589.5 Q407 585.5 414.4 589.5 V600 Q407 596 399.8 600 Z"/>
  <path d="M399.8 594.6 Q407 590.8 414.4 594.6 M407 587 V598"/>
 </g>
 <path d="M400 622.5 Q407 619 414 622.5 V633.5 Q407 629.5 400 633.5 Z" fill="url(#gg)" stroke="#111" stroke-width="0.6"/>
 <circle cx="413.5" cy="632.5" r="2.1" fill="#1de2b0" stroke="#111" stroke-width="0.6"/>
</svg>

<!-- viewport top toolbar -->
<div class="panel" style="left:527px;top:52px;width:484px;height:50px;border-radius:9px"></div>
<svg class="a" style="left:527px;top:52px" width="485" height="50" viewBox="527 52 485 50">
 <defs>
  <linearGradient id="cyl" x1="0" x2="1"><stop offset="0" stop-color="#c8c8c8"/><stop offset="0.5" stop-color="#ffffff"/><stop offset="1" stop-color="#b8b8b8"/></linearGradient>
 </defs>
 <!-- magnet -->
 <path d="M553 69.5 H550.6 A8 8 0 0 0 550.6 85.5 H553 V80.2 H550.8 A2.8 2.8 0 0 1 550.8 74.6 H553 Z" fill="#ececec" stroke="#111" stroke-width="1"/>
 <rect x="553.6" y="69.5" width="2.8" height="5.1" fill="#f4f4f4" stroke="#111" stroke-width="0.9"/>
 <rect x="553.6" y="80.2" width="2.8" height="5.3" fill="#f4f4f4" stroke="#111" stroke-width="0.9"/>
 <rect x="559.9" y="68.8" width="1.3" height="17.2" fill="#ececec"/>
 <circle cx="560.6" cy="77.4" r="2.9" fill="#1dcfa0" stroke="#111" stroke-width="0.8"/>
 <!-- tape -->
 <path d="M585.2 86.2 V76.5 A8.3 8.3 0 0 1 598 69.4 L601.6 72.6 V86.2 Z" fill="#f6f6f6" stroke="#111" stroke-width="0.8"/>
 <path d="M585.6 80.6 L590 86 H585.6 Z" fill="#9a9a9a"/>
 <circle cx="593.3" cy="76.6" r="4.2" fill="none" stroke="#555" stroke-width="0.8"/>
 <circle cx="593.3" cy="76.6" r="3" fill="#1dcfa0"/>
 <rect x="601.6" y="82" width="6.6" height="3.2" fill="#bdbdbd" stroke="#111" stroke-width="0.6"/>
 <circle cx="599.5" cy="83.8" r="1.5" fill="#1dcfa0"/>
 <!-- caliper -->
 <g stroke="#111" stroke-width="0.7">
  <path d="M630 68.2 L634 65.9 H643.5 L647.2 68.6 L645.5 69.5 H631.5 Z" fill="#f2f2f2"/>
  <path d="M633.6 69.5 H640.6 V86.2 L639.6 87.4 H634.6 L633.6 86.2 Z" fill="#f0f0f0"/>
  <path d="M630 78 L632.5 77 H647 L641 81.5 H640.6 V79.2 H633.6 V80.8 L631.5 79.2 Z" fill="#e4e4e4"/>
 </g>
 <path d="M635.3 79.5 V85.5 M638.9 79.5 V85.5" stroke="#111" stroke-width="0.8"/>
 <path d="M637.4 71.2 H640 M637.4 73.4 H640 M637.4 75.6 H640" stroke="#111" stroke-width="0.8"/>
 <circle cx="646.5" cy="73.3" r="2.6" fill="#1dcfa0"/>
 <rect x="662" y="63.8" width="1" height="26" fill="#4a4a4c"/>
 <!-- move -->
 <g fill="#1dcfa0">
  <path d="M684.1 65 L688.2 69.4 H685.6 V74 H682.6 V69.4 H680 Z"/>
  <path d="M684.1 88.8 L688.2 84.4 H685.6 V79.8 H682.6 V84.4 H680 Z"/>
  <path d="M672 77 L676.4 72.9 V75.5 H681 V78.5 H676.4 V81.1 Z"/>
  <path d="M696 77 L691.6 72.9 V75.5 H687 V78.5 H691.6 V81.1 Z"/>
 </g>
 <circle cx="684.1" cy="77" r="2.4" fill="#fff" stroke="#111" stroke-width="0.7"/>
 <!-- ball -->
 <circle cx="727" cy="76.6" r="11.3" fill="#dcdcdc" stroke="#111" stroke-width="1"/>
 <g fill="none" stroke="#111" stroke-width="0.8">
  <path d="M721.3 71.3 L733 73 L724.8 80.5 Z M721.3 71.3 L727 65.6 L733 73 L738.2 76 L733.6 84 L724.8 80.5 L718 82 L716 75 L721.3 71.3 M724.8 80.5 L727.3 87.8 L733.6 84 M727 65.6 L716.4 72 M733 73 L736 68.5"/>
 </g>
 <path d="M721.8 72 L732.2 73.3 L725 79.8 Z" fill="#1dcfa0"/>
 <!-- cone -->
 <path d="M769.7 64.8 L763.5 76 H776 Z" fill="#d6d6d6"/>
 <path d="M760.5 74.5 H779 L782.4 82.7 H757.9 Z" fill="#8a8a8a" stroke="#111" stroke-width="0.6"/>
 <path d="M759.5 83 H780.5 Q780 89 770 89 Q760 89 759.5 83 Z" fill="#ffffff"/>
 <ellipse cx="769.9" cy="77.8" rx="9" ry="3" fill="#1dcfa0" stroke="#111" stroke-width="0.6"/>
 <!-- cylinder on plate -->
 <path d="M805.8 69 V74.2 A7.1 2.3 0 0 0 820 74.2 V69 Z" fill="url(#cyl)"/>
 <ellipse cx="812.9" cy="69" rx="7.1" ry="2.3" fill="#f4f4f4"/>
 <path d="M804.3 78.6 H822 L825.4 89.1 H800.7 Z" fill="#d6d6d6" stroke="#111" stroke-width="0.6"/>
 <ellipse cx="813" cy="83.8" rx="7" ry="2.6" fill="#1dcfa0"/>
 <!-- map -->
 <path d="M844.6 68 L850.5 65.8 L856 68 L862 65.8 L867.2 68 V86 L862 87.9 L856 85.8 L850.5 87.9 L844.6 86 Z" fill="#e0e0e0" stroke="#111" stroke-width="0.6"/>
 <path d="M850.5 65.8 V87.9 M862 65.8 V87.9 M844.6 77.5 L856 75.5 L867.2 77" fill="none" stroke="#555" stroke-width="0.7"/>
 <path d="M844.6 68 L850.5 65.8 V87.9 L844.6 86 Z M856 68 L862 65.8 V87.9 L856 85.8Z" fill="#c4c4c4"/>
 <circle cx="856.4" cy="76" r="2.1" fill="#1dcfa0" stroke="#111" stroke-width="0.5"/>
 <!-- box -->
 <path d="M887.5 71.8 L899.8 66.7 L910.4 72.5 L898.5 78 Z" fill="#ffffff"/>
 <path d="M887.5 71.8 L898.5 78 V87 L887.5 80.5 Z" fill="#f0f0f0"/>
 <path d="M910.4 72.5 L898.5 78 V87 L910.4 81 Z" fill="#d4d4d4"/>
 <g fill="none" stroke="#159e7c" stroke-width="1.2"><path d="M890.4 77.5 V73.6 L892 72.8 M893 79 V75 L894.6 74.2 M895.6 80.4 V76.6 L897.2 75.8"/></g>
 <!-- plate with hole -->
 <ellipse cx="942" cy="69.9" rx="7" ry="3" fill="#1dcfa0"/>
 <path d="M933.2 78.6 H951 L954 89 H929.9 Z" fill="#d8d8d8" stroke="#111" stroke-width="0.6"/>
 <ellipse cx="942" cy="84" rx="6.5" ry="2.6" fill="#2b2b2d" stroke="#111" stroke-width="0.6"/>
 <!-- path plus -->
 <path d="M975.3 67.5 H988.5 A4.4 4.4 0 0 1 988.5 76.4 H988.9" fill="none" stroke="#f0f0f0" stroke-width="1.3"/>
 <path d="M980 76.4 A5 5 0 0 0 980 86.5 H987.3" fill="none" stroke="#1dcfa0" stroke-width="1.3"/>
 <path d="M984.2 72.3 L985.3 74.8 L988 74 L987 76.4 L988.2 78.7 L985.6 78.2 L984.2 80.4 L983 78.2 L980.4 78.7 L981.5 76.4 L980.4 74 L983 74.8 Z" fill="#1dcfa0"/>
 <path d="M993.5 82 V89 M990 85.5 H997" stroke="#f4f4f4" stroke-width="1.3"/>
</svg>

<!-- viewcube -->
<svg class="a" style="left:395px;top:630px" width="125" height="95" viewBox="395 630 125 95">
 <path d="M459.6 635.4 L499.5 654.6 L466.3 673.8 L427 655.2 Z" fill="#383838" stroke="#242424" stroke-width="0.8"/>
 <path d="M427 655.2 L466.3 673.8 L463.7 718 L423.4 695.9 Z" fill="#363636" stroke="#242424" stroke-width="0.8"/>
 <path d="M499.5 654.6 L466.3 673.8 L463.7 718 L496.9 695.9 Z" fill="#343434" stroke="#242424" stroke-width="0.8"/>
 <g font-family="Liberation Sans" font-size="10.5" fill="#e6e6e6">
  <text transform="translate(465.5 656) rotate(-40)" text-anchor="middle" font-size="9.5">Top</text>
  <text transform="translate(445.5 689.5) rotate(24)" text-anchor="middle" font-size="11">Left</text>
  <text transform="translate(482 689.5) rotate(-32) skewX(-10)" text-anchor="middle" font-size="10.5">Front</text>
 </g>
 <path d="M465.4 656.5 H471.6 L465 662 H471.8" fill="none" stroke="#2a4de6" stroke-width="1.3"/>
 <path d="M463.7 718 L467.6 667.9" stroke="#2a4de6" stroke-width="1.6"/>
 <path d="M463.7 718 L417.6 695.2" stroke="#1a9a74" stroke-width="1.8"/>
 <path d="M463.7 718 L500.8 695.2" stroke="#d2104c" stroke-width="1.8"/>
 <path d="M403.6 684.8 L407.7 690 L411.8 684.8 M407.7 690 V695.2" fill="none" stroke="#19b888" stroke-width="1.4"/>
 <path d="M505.2 684.8 L512.8 695.2 M512.8 684.8 L505.2 695.2" fill="none" stroke="#d2104c" stroke-width="1.5"/>
</svg>
<!-- bottom left toolbar -->
<div class="panel" style="left:508px;top:716px;width:86px;height:30px;border-radius:5px"></div>
<svg class="a" style="left:508px;top:716px" width="86" height="30" viewBox="508 716 86 30">
 <defs>
  <radialGradient id="sph" cx="0.35" cy="0.35" r="0.7"><stop offset="0" stop-color="#ffffff"/><stop offset="1" stop-color="#8a8a8a"/></radialGradient>
  <linearGradient id="whl" x1="0" x2="1"><stop offset="0" stop-color="#888"/><stop offset="0.5" stop-color="#f0f0f0"/><stop offset="1" stop-color="#aaa"/></linearGradient>
 </defs>
 <g fill="none" stroke="#1de2c0" stroke-width="1.8">
  <path d="M515.8 728.6 V723.9 H520.4 M525.6 723.9 H530.2 V728.6 M530.2 733.4 V738.1 H525.6 M520.4 738.1 H515.8 V733.4"/>
 </g>
 <rect x="518.4" y="726.6" width="9.1" height="8.7" fill="#fff" stroke="#111" stroke-width="0.8"/>
 <circle cx="550.9" cy="731" r="8" fill="url(#sph)" stroke="#111" stroke-width="0.9"/>
 <path d="M543 733 Q550.9 731 558.8 733 M552.5 723.2 Q551.2 731 552.8 738.8" fill="none" stroke="#111" stroke-width="0.9"/>
 <path d="M576 722 H579 A3.2 9 0 0 1 579 740 H576 A5.5 9 0 0 1 576 722 Z" fill="url(#whl)"/>
 <ellipse cx="579" cy="731" rx="3.5" ry="9" fill="#fff"/>
 <ellipse cx="580" cy="731" rx="2.4" ry="6.5" fill="#777"/>
 <rect x="580.5" y="727" width="5" height="8" fill="#d0d0d0"/>
 <ellipse cx="585.5" cy="731" rx="2.4" ry="4" fill="#fff"/>
</svg>
<!-- bottom right -->
<div class="a" style="left:865px;top:716px;width:29.5px;height:30px;background:#2a2a2c;border-radius:4px;border:1px solid #303032"></div>
<div class="a" style="left:896.5px;top:716px;width:29.5px;height:30px;background:#2a2a2c;border-radius:4px;border:1px solid #303032"></div>
<div class="a" style="left:932px;top:716px;width:120px;height:30px;background:#2a2a2c;border-radius:4px;border:1px solid #303032"></div>
<div class="a" style="left:1058px;top:716px;width:30px;height:30px;background:#2a2a2c;border-radius:4px;border:1px solid #303032"></div>
<div class="a" style="left:964.5px;top:723.5px;font-size:12.5px;line-height:16px;color:#ececec">Global CS</div>
<div class="a" style="left:1105px;top:724px;font-size:13.5px;line-height:16px;color:#ececec">1%</div>
<svg class="a" style="left:860px;top:710px" width="300" height="45" viewBox="860 710 300 45">
 <path d="M880.1 725.1 V737.2 M874.1 731.1 H886.1" stroke="#a8a8a8" stroke-width="2"/>
 <path d="M906.3 729.2 L911 733.6 L915.7 729.2" fill="none" stroke="#9a9a9a" stroke-width="1.4"/>
 <path d="M942.9 729.2 L947 726.8 L951.1 729.2 V734 L947 736.4 L942.9 734 Z" fill="#1a9e78"/>
 <path d="M947 723.8 V731.6 M947 731.6 L939.5 736.5 M947 731.6 L954.5 736.5" stroke="#e8e8e8" stroke-width="1.1"/>
 <circle cx="947" cy="724" r="1" fill="#e8e8e8"/>
 <path d="M1066.6 736 Q1068.5 734.5 1068.5 731 V729 A4.5 4.5 0 0 1 1077.5 729 V731 Q1077.5 734.5 1079.4 736 Z" fill="none" stroke="#b0b0b0" stroke-width="1.3"/>
 <path d="M1070 738.9 H1076" stroke="#b0b0b0" stroke-width="1.2"/>
 <rect x="1139" y="717.9" width="8" height="27" fill="#1c2828" stroke="#18898a" stroke-width="2"/>
</svg>

<!-- annotations -->
<svg class="a" style="left:0;top:0;pointer-events:none" width="1163" height="769"><g fill="#f2f2f2"><path d="M322 153.8 H439 V156.2 H322 Z M312 155 L322.5 150 V160 Z"/><path d="M324 195.0 H443 V197.39999999999998 H324 Z M314 196.2 L324.5 191.2 V201.2 Z"/><path d="M368.3 473.2 H447 V475.59999999999997 H368.3 Z M358.3 474.4 L368.8 469.4 V479.4 Z"/><path d="M154.7 511.59999999999997 H449 V514.0 H154.7 Z M144.7 512.8 L155.2 507.79999999999995 V517.8 Z"/></g></svg><div class="a" style="left:450px;top:145px;font-size:14.5px;line-height:20px;color:#f0f0f0;white-space:nowrap">Model Tree</div><div class="a" style="left:451px;top:186px;font-size:14.5px;line-height:20px;color:#f0f0f0;white-space:nowrap">Active group</div><div class="a" style="left:452px;top:454px;font-size:14.5px;line-height:20px;color:#f0f0f0;white-space:nowrap">List of<br>available objects</div><div class="a" style="left:454px;top:502px;font-size:14.5px;line-height:20px;color:#f0f0f0;white-space:nowrap">Selected objects</div>
</body></html>
